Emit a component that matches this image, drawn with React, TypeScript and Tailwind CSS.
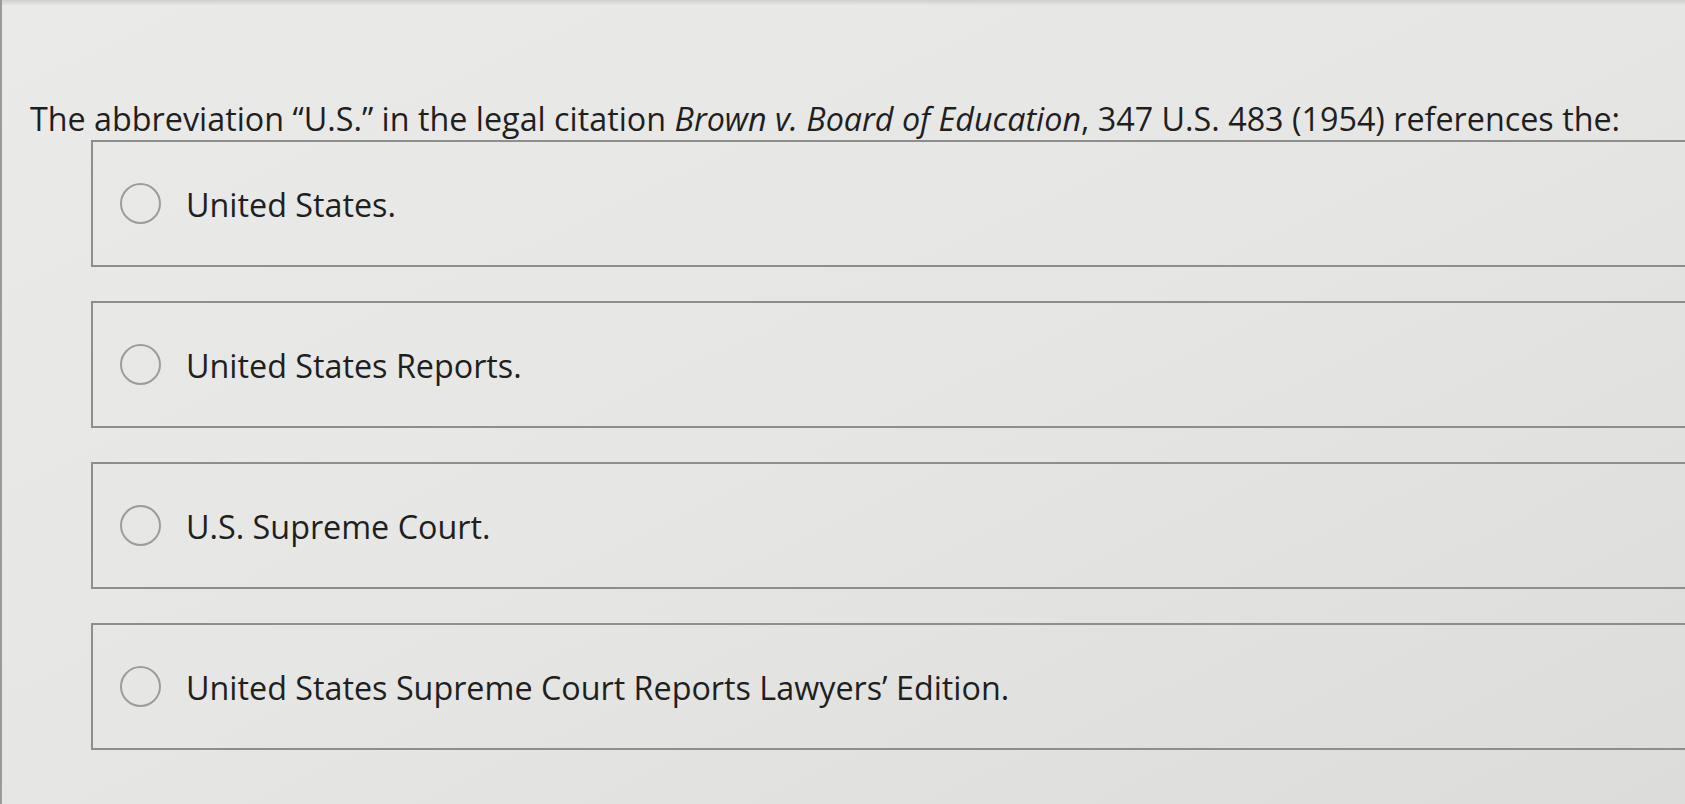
import React from "react";

const options = [
  "United States.",
  "United States Reports.",
  "U.S. Supreme Court.",
  "United States Supreme Court Reports Lawyers\u2019 Edition.",
];

export default function App() {
  return (
    <div
      className="relative w-[1685px] h-[804px] overflow-hidden bg-gradient-to-br from-[#eaeae8] via-[#e6e6e4] to-[#dcdcda] text-[#1f1f1f]"
      style={{ fontFamily: '"Open Sans", "Noto Sans", sans-serif' }}
    >
      <div className="h-[5px] bg-gradient-to-b from-[#cfcfcd] to-[#e6e6e4]" />
      <div className="absolute left-0 top-0 h-full w-[2px] bg-[#9a9a98]" />
      <div className="pl-[30px] pt-[93px]">
        <p className="text-[32.3px] leading-[40px] whitespace-nowrap">
          The abbreviation {"\u201C"}U.S.{"\u201D"} in the legal citation{" "}
          <i>Brown v. Board of Education</i>, 347 U.S. 483 (1954) references the:
        </p>
      </div>
      <div className="ml-[91px] mr-[-40px] mt-[2px] flex flex-col gap-[34px]">
        {options.map((o) => (
          <div
            key={o}
            className="h-[127px] border-2 border-[#8e8e8c] flex items-center pl-[27px]"
          >
            <span className="w-[41px] h-[41px] rounded-full border-2 border-[#9c9c9a] shrink-0" />
            <span className="ml-[25px] text-[32.3px] leading-[40px]">
              {o}
            </span>
          </div>
        ))}
      </div>
    </div>
  );
}
